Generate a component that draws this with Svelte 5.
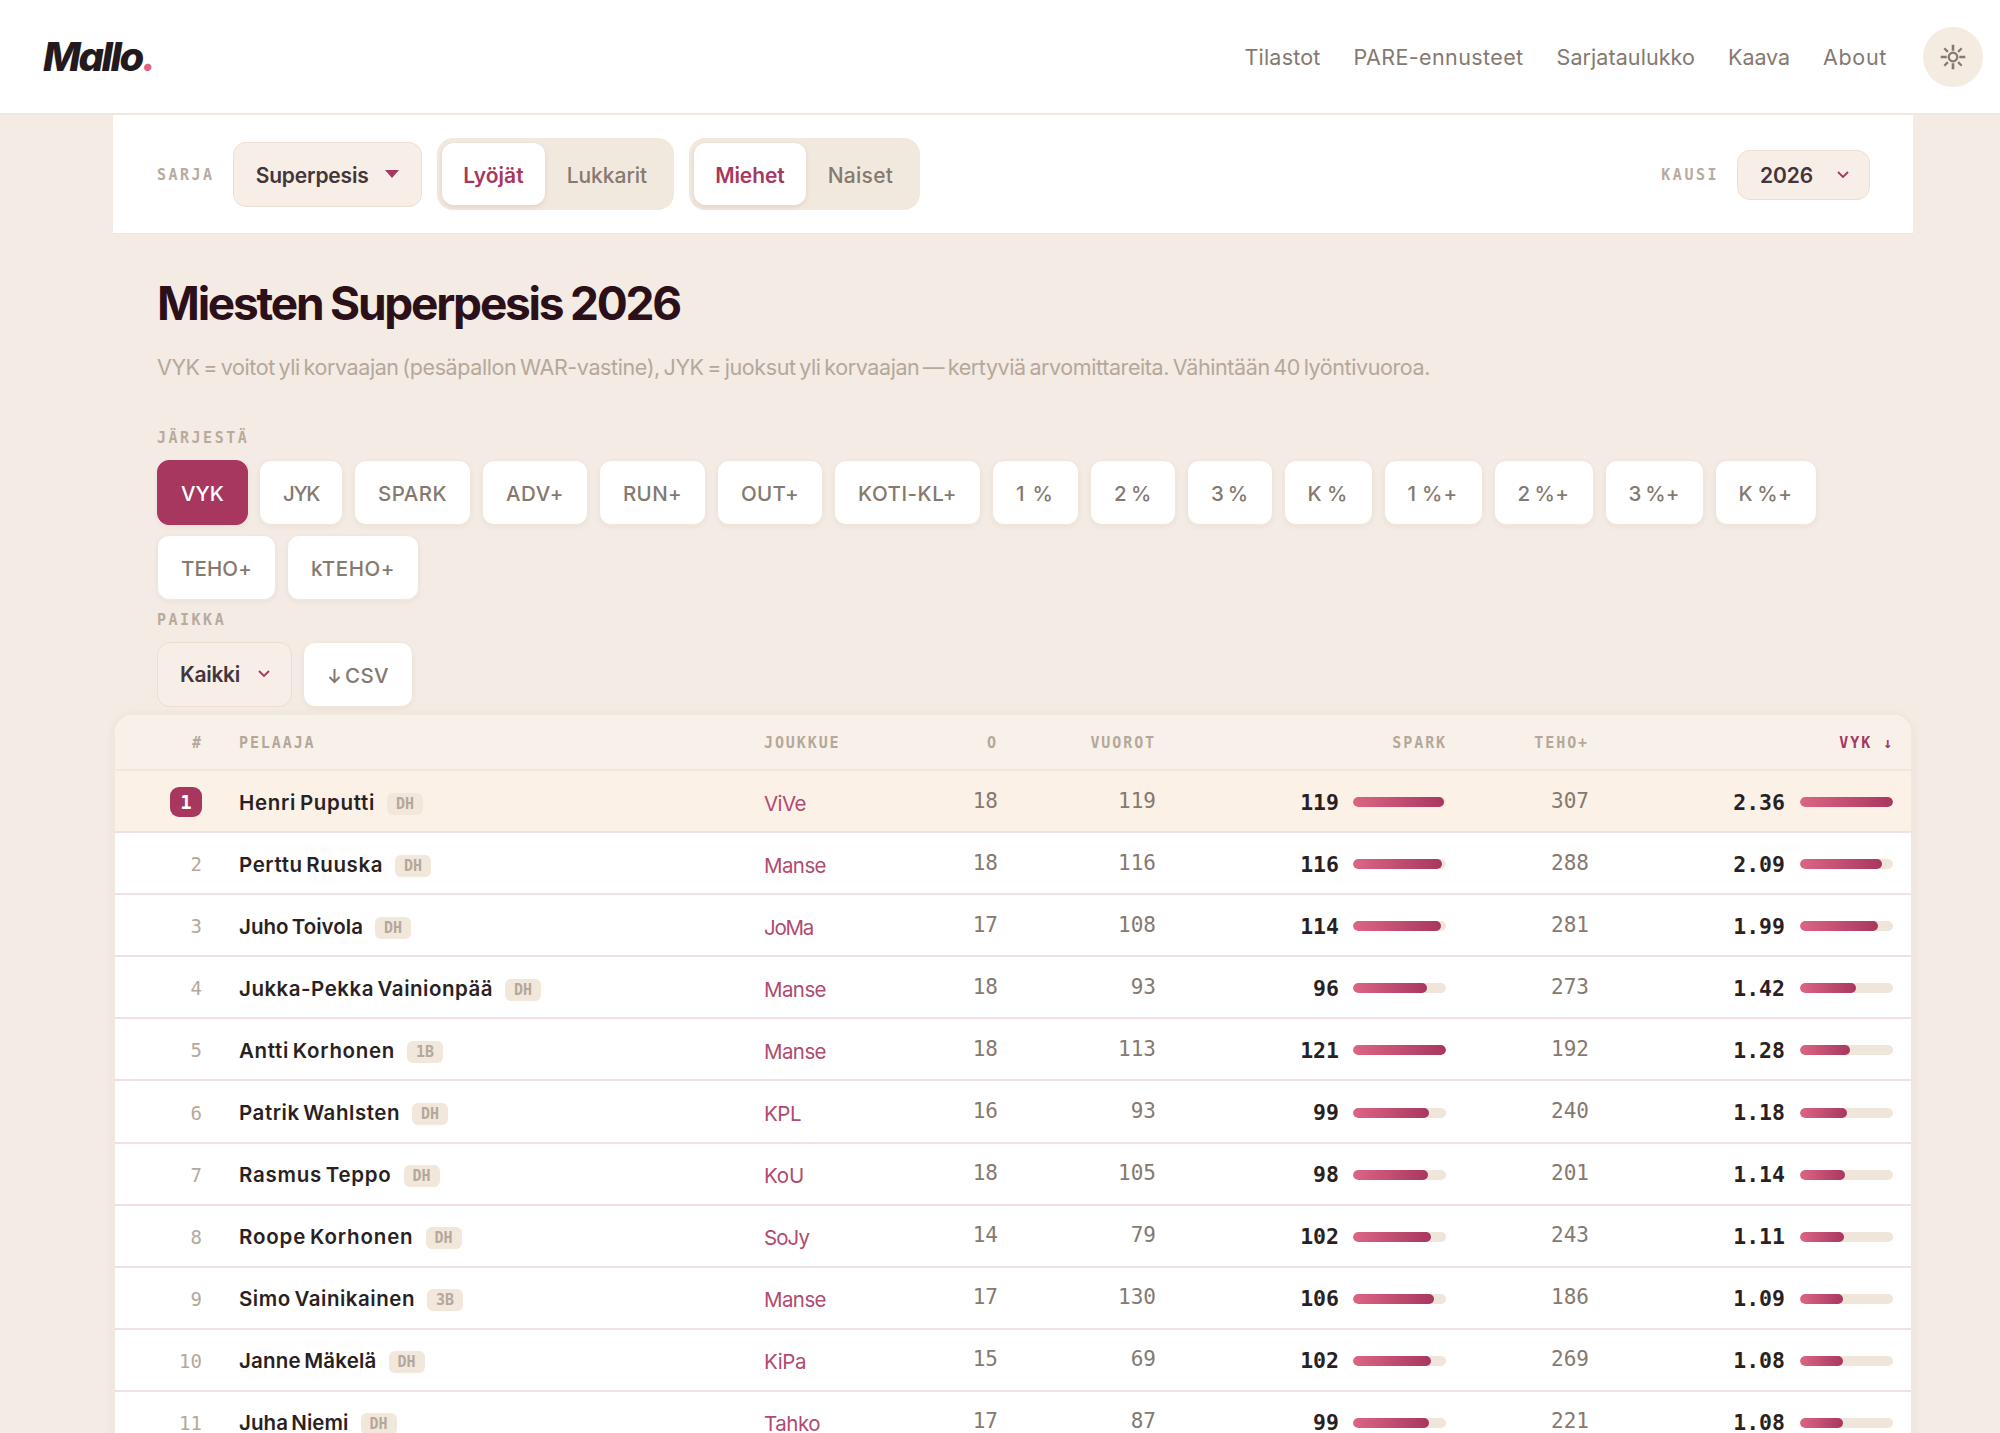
<script>
  const nav = [
    ['Tilastot', 76],
    ['PARE-ennusteet', 170],
    ['Sarjataulukko', 138.5],
    ['Kaava', 62],
    ['About', 64]
  ];

  const sorts = [
    ['VYK', 43], ['JYK', 36], ['SPARK', 69], ['ADV+', 58], ['RUN+', 59],
    ['OUT+', 58], ['KOTI-KL+', 99], ['1 %', 39], ['2 %', 38], ['3 %', 37.5],
    ['K %', 41], ['1 %+', 51], ['2 %+', 52], ['3 %+', 51], ['K %+', 54],
    ['TEHO+', 71], ['kTEHO+', 84]
  ];

  const teamWidths = { ViVe: 42, Manse: 62, JoMa: 49, KPL: 37, KoU: 40, SoJy: 45, KiPa: 42, Tahko: 56 };

  const players = [
    { name: 'Henri Puputti', w: 136, pos: 'DH', team: 'ViVe', o: 18, turns: 119, spark: 119, teho: 307, vyk: 2.36 },
    { name: 'Perttu Ruuska', w: 144, pos: 'DH', team: 'Manse', o: 18, turns: 116, spark: 116, teho: 288, vyk: 2.09 },
    { name: 'Juho Toivola', w: 124, pos: 'DH', team: 'JoMa', o: 17, turns: 108, spark: 114, teho: 281, vyk: 1.99 },
    { name: 'Jukka-Pekka Vainionpää', w: 254, pos: 'DH', team: 'Manse', o: 18, turns: 93, spark: 96, teho: 273, vyk: 1.42 },
    { name: 'Antti Korhonen', w: 156, pos: '1B', team: 'Manse', o: 18, turns: 113, spark: 121, teho: 192, vyk: 1.28 },
    { name: 'Patrik Wahlsten', w: 161, pos: 'DH', team: 'KPL', o: 16, turns: 93, spark: 99, teho: 240, vyk: 1.18 },
    { name: 'Rasmus Teppo', w: 152.5, pos: 'DH', team: 'KoU', o: 18, turns: 105, spark: 98, teho: 201, vyk: 1.14 },
    { name: 'Roope Korhonen', w: 174.5, pos: 'DH', team: 'SoJy', o: 14, turns: 79, spark: 102, teho: 243, vyk: 1.11 },
    { name: 'Simo Vainikainen', w: 176, pos: '3B', team: 'Manse', o: 17, turns: 130, spark: 106, teho: 186, vyk: 1.09 },
    { name: 'Janne Mäkelä', w: 137.5, pos: 'DH', team: 'KiPa', o: 15, turns: 69, spark: 102, teho: 269, vyk: 1.08 },
    { name: 'Juha Niemi', w: 109.5, pos: 'DH', team: 'Tahko', o: 17, turns: 87, spark: 99, teho: 221, vyk: 1.08 }
  ];

  const maxSpark = Math.max(...players.map((p) => p.spark));
  const maxVyk = Math.max(...players.map((p) => p.vyk));

  // Adjusts tracking so a label takes exactly the given width.
  function fit(node, width) {
    const natural = node.getBoundingClientRect().width;
    const base = parseFloat(getComputedStyle(node).letterSpacing) || 0;
    node.style.letterSpacing = `${base + (width - natural) / node.textContent.length}px`;
  }
</script>

<header class="topbar">
  <a class="logo" href="#top"><span class="t" use:fit={99}>Mallo</span><span class="dot">.</span></a>
  <nav>
    {#each nav as [label, w]}
      <a href="#top"><span class="t" use:fit={w}>{label}</span></a>
    {/each}
  </nav>
  <button class="theme" aria-label="Teema">
    <svg width="26" height="26" viewBox="-13 -13 26 26" fill="none" stroke="currentColor">
      <circle r="4.3" stroke-width="2.2" />
      <path stroke-width="2.6" d="M0-12.3v6M0 12.3v-6M-12.3 0h6M12.3 0h-6" />
      <path stroke-width="2.2" d="M-8.7-8.7l3.6 3.6M8.7-8.7l-3.6 3.6M-8.7 8.7l3.6-3.6M8.7 8.7l-3.6-3.6" />
    </svg>
  </button>
</header>

<div class="page">
  <section class="filters">
    <span class="label">SARJA</span>
    <button class="select series"><span class="t" use:fit={113}>Superpesis</span><i class="caret"></i></button>
    <div class="toggle">
      <button class="on"><span class="t" use:fit={60.5}>Lyöjät</span></button>
      <button><span class="t" use:fit={80.5}>Lukkarit</span></button>
    </div>
    <div class="toggle">
      <button class="on"><span class="t" use:fit={69.5}>Miehet</span></button>
      <button><span class="t" use:fit={65.5}>Naiset</span></button>
    </div>
    <span class="label season">KAUSI</span>
    <button class="select year">
      <span class="t" use:fit={53}>2026</span>
      <svg class="chev" width="14" height="9" viewBox="0 0 14 9"><path d="M2 2l5 5 5-5" /></svg>
    </button>
  </section>

  <section class="intro">
    <h1><span class="t" use:fit={523}>Miesten Superpesis 2026</span></h1>
    <p><span class="t" use:fit={1273}>VYK = voitot yli korvaajan (pesäpallon WAR-vastine), JYK = juoksut yli korvaajan — kertyviä arvomittareita. Vähintään 40 lyöntivuoroa.</span></p>
  </section>

  <section class="controls">
    <span class="label">JÄRJESTÄ</span>
    <div class="chips">
      {#each sorts as [label, w], i}
        <button class="chip" class:active={i === 0}><span class="t" use:fit={w}>{label}</span></button>
      {/each}
    </div>
    <span class="label place">PAIKKA</span>
    <div class="chips">
      <button class="select pos">
        <span class="t" use:fit={60}>Kaikki</span>
        <svg class="chev" width="14" height="9" viewBox="0 0 14 9"><path d="M2 2l5 5 5-5" /></svg>
      </button>
      <button class="chip csv">
        <svg width="13" height="16" viewBox="0 0 13 16"><path d="M6.5 1v13M1.5 9l5 5 5-5" /></svg>
        <span class="t" use:fit={44}>CSV</span>
      </button>
    </div>
  </section>

  <section class="card">
    <div class="row head">
      <span class="r">#</span>
      <span class="player">PELAAJA</span>
      <span>JOUKKUE</span>
      <span class="r">O</span>
      <span class="r">VUOROT</span>
      <span class="r">SPARK</span>
      <span class="r">TEHO+</span>
      <span class="r sorted">VYK ↓</span>
    </div>
    {#each players as p, i}
      <div class="row" class:lead={i === 0}>
        <span class="r rank"><span class:medal={i === 0}>{i + 1}</span></span>
        <span class="player"><span class="name"><span class="t" use:fit={p.w}>{p.name}</span></span><span class="badge">{p.pos}</span></span>
        <span class="team"><span class="t" use:fit={teamWidths[p.team]}>{p.team}</span></span>
        <span class="r num">{p.o}</span>
        <span class="r num">{p.turns}</span>
        <span class="meter"><b>{p.spark}</b><span class="track"><span class="fill" style="width: {(p.spark / maxSpark) * 100}%"></span></span></span>
        <span class="r num">{p.teho}</span>
        <span class="meter vyk"><b>{p.vyk.toFixed(2)}</b><span class="track"><span class="fill" style="width: {(p.vyk / maxVyk) * 100}%"></span></span></span>
      </div>
    {/each}
  </section>
</div>

<style>
  :global(html) { overflow: hidden; }
  :global(body) {
    margin: 0;
    height: 1433px;
    overflow: hidden;
    background: #f3ebe4;
    font-family: Inter, "Liberation Sans", sans-serif;
    color: #2a1f23;
  }
  :global(*) { box-sizing: border-box; }
  button {
    font: inherit;
    border: 0;
    padding: 0;
    background: none;
    color: inherit;
  }
  a { color: inherit; text-decoration: none; }
  .t { display: inline-block; white-space: nowrap; }

  .topbar {
    height: 115px;
    display: flex;
    align-items: center;
    padding: 0 17px 0 43px;
    background: #fff;
    border-bottom: 2px solid #f0e8dd;
  }
  .logo {
    font-size: 40px;
    line-height: 48px;
    font-weight: 800;
    font-style: italic;
    letter-spacing: -2px;
    color: #231a1d;
  }
  .dot { color: #dc6584; }
  nav {
    display: flex;
    gap: 33px;
    margin-left: auto;
    margin-right: 36px;
    font-size: 21.5px;
    color: #857970;
  }
  .theme {
    width: 60px;
    height: 60px;
    border-radius: 50%;
    background: #f4ebe1;
    color: #857970;
    display: grid;
    place-items: center;
  }

  .page { width: 1800px; margin-left: 113px; }
  .filters {
    height: 119px;
    display: flex;
    align-items: center;
    padding: 0 43px 0 44px;
    background: #fff;
    border-bottom: 1px solid #f0e6db;
  }
  .label {
    display: block;
    font-family: "DejaVu Sans Mono", monospace;
    font-size: 15px;
    font-weight: 700;
    line-height: 18px;
    letter-spacing: 2.5px;
    color: #b8ab9e;
  }
  .filters .label { padding-top: 2px; }
  .season { margin-left: auto; }
  .select {
    display: flex;
    align-items: center;
    justify-content: space-between;
    background: #f6eee7;
    border: 1px solid #ecdfd2;
    border-radius: 13px;
    font-size: 21px;
    font-weight: 600;
    color: #43353a;
  }
  .select .t, .toggle .t, .chip .t { padding-top: 2px; }
  .series { width: 189px; height: 65px; margin-left: 18px; padding: 0 22px 0 22px; }
  .caret {
    border: 7px solid transparent;
    border-top: 8px solid #a8375f;
    border-bottom: 0;
  }
  .year { width: 133px; height: 50px; margin: 1px 0 0 18px; padding: 0 19px 0 22px; }
  .chev path { fill: none; stroke: #a8375f; stroke-width: 1.8; }
  .toggle {
    display: flex;
    height: 72px;
    padding: 5px;
    margin-left: 15px;
    border-radius: 16px;
    background: #f2e9de;
    font-size: 21px;
    font-weight: 500;
    color: #857970;
  }
  .toggle button { padding: 0 21.5px; border-radius: 12px; }
  .toggle .on { background: #fff; color: #a8375f; font-weight: 600; box-shadow: 0 2px 5px rgba(120, 50, 60, 0.12); }

  .intro { padding: 40px 44px 0 44px; }
  h1 {
    margin: 0;
    font-size: 46px;
    line-height: 58px;
    font-weight: 700;
    word-spacing: -1px;
    color: #2b1019;
  }
  p {
    margin: 21px 0 0;
    font-size: 21.5px;
    line-height: 28px;
    word-spacing: -2px;
    color: #b5a89b;
  }

  .controls { padding: 48px 44px 0; }
  .chips { display: flex; flex-wrap: wrap; gap: 10px 11px; margin-top: 13px; margin-right: -10px; }
  .chip {
    height: 65px;
    padding: 0 23px;
    border: 1px solid #f0e7dc;
    border-radius: 12px;
    background: #fff;
    font-size: 20.5px;
    font-weight: 500;
    word-spacing: -2px;
    color: #857970;
    box-shadow: 0 2px 5px rgba(120, 90, 50, 0.06);
  }
  .chip.active { background: #a8375f; border-color: #a8375f; color: #fff; }
  .place { margin-top: 11px; }
  .pos { width: 135px; height: 65px; padding: 0 20px 2px 22px; }
  .csv { display: flex; align-items: center; gap: 4px; padding-left: 24px; }
  .csv svg { fill: none; stroke: currentColor; stroke-width: 2; margin-top: 3px; }

  .card {
    margin-top: 6px;
    height: 740px;
    border: 2px solid #f1e8dd;
    border-bottom: 0;
    border-radius: 20px 20px 0 0;
    background: #fff;
    overflow: hidden;
    box-shadow: 0 2px 8px rgba(120, 90, 50, 0.06);
  }
  .row {
    display: grid;
    grid-template-columns: 87px 562px 155px 78px 158px 291px 142px 305px;
    align-items: center;
    height: 62.1px;
    padding-top: 2px;
    border-bottom: 2px solid #f1dfe5;
  }
  .head {
    height: 56px;
    background: #f8f1ea;
    border-bottom-color: #f1e7dc;
    font-family: "DejaVu Sans Mono", monospace;
    font-size: 15px;
    font-weight: 700;
    letter-spacing: 1.9px;
    color: #b5a89b;
  }
  .lead { background: #fbf1e7; }
  .r { text-align: right; }
  .head .r { margin-right: -1px; }
  .player { padding-left: 37px; display: flex; align-items: center; }
  .sorted { color: #a8375f; }
  .rank { font-family: "DejaVu Sans Mono", monospace; font-size: 19px; color: #b5a89b; }
  .medal {
    display: inline-block;
    width: 32px;
    height: 30px;
    border-radius: 9px;
    background: #a8375f;
    color: #fff;
    font-weight: 700;
    line-height: 30px;
    text-align: center;
  }
  .name { font-size: 20.5px; font-weight: 600; word-spacing: -2px; color: #2a1f23; }
  .badge {
    margin: 3px 0 0 12px;
    width: 36px;
    height: 22px;
    border-radius: 6px;
    background: #f1e7db;
    font-family: "DejaVu Sans Mono", monospace;
    font-size: 15px;
    font-weight: 700;
    line-height: 23px;
    text-align: center;
    color: #b5a89b;
  }
  .team { font-size: 20.5px; line-height: 26px; color: #b04a70; padding-top: 3px; }
  .num { font-family: "DejaVu Sans Mono", monospace; font-size: 21px; color: #857970; padding-bottom: 3px; margin-right: -1px; }
  .meter { display: flex; align-items: center; justify-content: flex-end; }
  .meter b { font-family: "DejaVu Sans Mono", monospace; font-size: 21.5px; color: #2a1f23; margin-right: 14px; }
  .vyk b { margin-right: 15px; }
  .track { width: 93px; height: 10px; border-radius: 5px; background: #f0e5d9; overflow: hidden; }
  .fill { display: block; height: 100%; border-radius: 5px; background: linear-gradient(90deg, #dc6584, #a8375f); }
</style>
